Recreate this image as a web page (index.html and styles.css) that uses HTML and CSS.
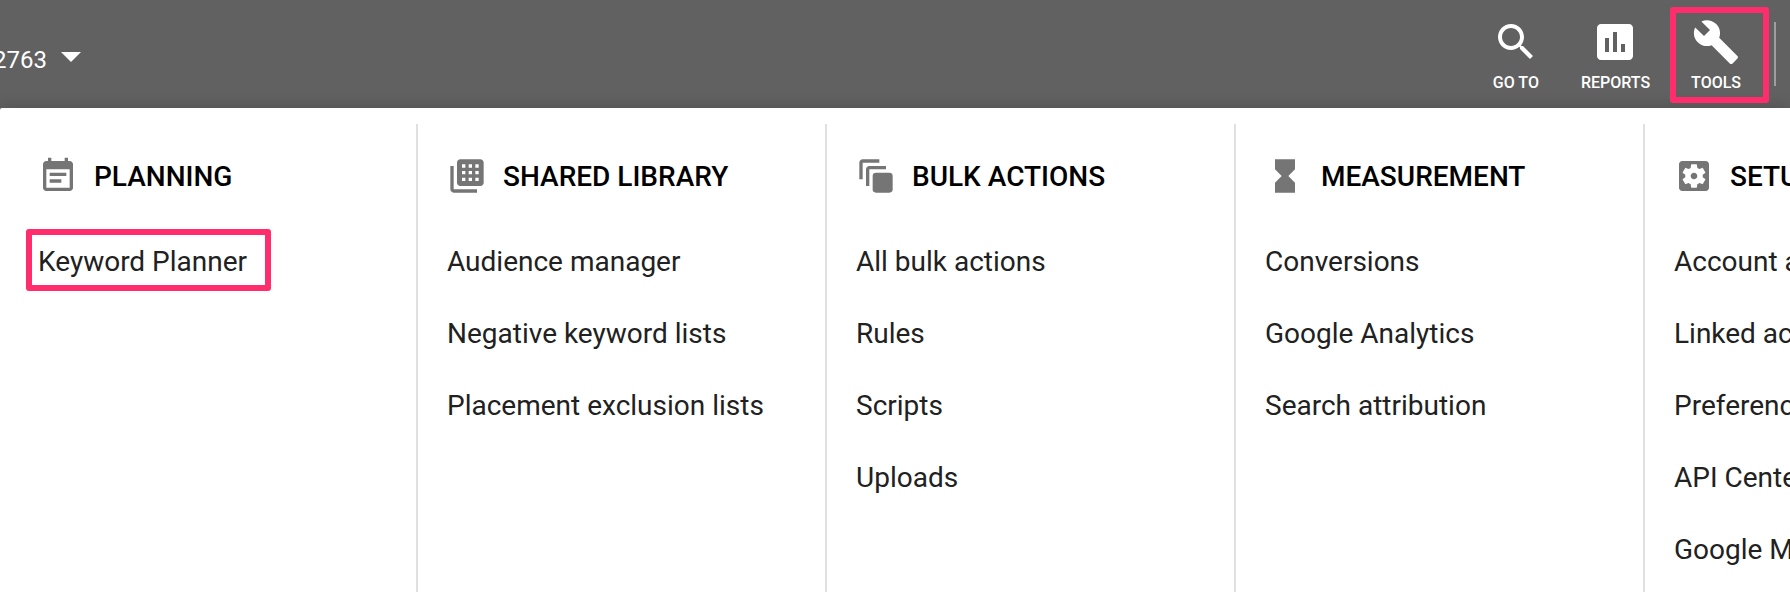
FILE: index.html
```html
<!DOCTYPE html>
<html lang="en">
<head>
  <meta charset="UTF-8">
  <title>Tools</title>
  <link rel="stylesheet" href="styles.css">
</head>
<body>
  <header class="topbar">
    <button class="account" type="button">
      <span class="account-id">2763</span>
      <svg class="caret" viewBox="0 0 24 24"><path d="M7 10l5 5 5-5z"/></svg>
    </button>

    <nav class="actions">
      <button class="action" type="button">
        <svg viewBox="0 0 24 24"><path d="M15.5 14h-.79l-.28-.27C15.41 12.59 16 11.11 16 9.5 16 5.91 13.09 3 9.5 3S3 5.91 3 9.5 5.91 16 9.5 16c1.61 0 3.09-.59 4.23-1.57l.27.28v.79l5 4.99L20.49 19l-4.99-5zm-6 0C7.01 14 5 11.99 5 9.5S7.01 5 9.5 5 14 7.01 14 9.5 11.99 14 9.5 14z"/></svg>
        <span>GO TO</span>
      </button>
      <button class="action" type="button">
        <svg viewBox="0 0 24 24"><path d="M19 3H5c-1.1 0-2 .9-2 2v14c0 1.1.9 2 2 2h14c1.1 0 2-.9 2-2V5c0-1.1-.9-2-2-2zM9 17H7v-7h2v7zm4 0h-2V7h2v10zm4 0h-2v-4h2v4z"/></svg>
        <span>REPORTS</span>
      </button>
      <button class="action marked" type="button">
        <svg viewBox="0 0 24 24"><path d="M22.7 19l-9.1-9.1c.9-2.3.4-5-1.5-6.9-2-2-5-2.4-7.4-1.3L9 6 6 9 1.6 4.7C.4 7.1.9 10.1 2.9 12.1c1.9 1.9 4.6 2.4 6.9 1.5l9.1 9.1c.4.4 1 .4 1.4 0l2.3-2.3c.5-.4.5-1.1.1-1.4z"/></svg>
        <span>TOOLS</span>
      </button>
    </nav>
    <div class="divider"></div>
  </header>

  <main class="menu">
    <section class="column">
      <h2>
        <svg viewBox="0 0 24 24"><path d="M17 10H7v2h10v-2zm2-7h-1V1h-2v2H8V1H6v2H5c-1.11 0-1.99.9-1.99 2L3 19c0 1.1.89 2 2 2h14c1.1 0 2-.9 2-2V5c0-1.1-.9-2-2-2zm0 16H5V8h14v11zm-5-5H7v2h7v-2z"/></svg>
        PLANNING
      </h2>
      <ul>
        <li><a class="marked" href="#">Keyword Planner</a></li>
      </ul>
    </section>

    <section class="column">
      <h2>
        <svg viewBox="0 0 24 24"><path d="M4 6H2v14c0 1.1.9 2 2 2h14v-2H4V6z"/><path fill-rule="evenodd" d="M20 2H8c-1.1 0-2 .9-2 2v12c0 1.1.9 2 2 2h12c1.1 0 2-.9 2-2V4c0-1.1-.9-2-2-2zM9 5h2v2H9zM13 5h2v2h-2zM17 5h2v2h-2zM9 9h2v2H9zM13 9h2v2h-2zM17 9h2v2h-2zM9 13h2v2H9zM13 13h2v2h-2zM17 13h2v2h-2z"/></svg>
        SHARED LIBRARY
      </h2>
      <ul>
        <li><a href="#">Audience manager</a></li>
        <li><a href="#">Negative keyword lists</a></li>
        <li><a href="#">Placement exclusion lists</a></li>
      </ul>
    </section>

    <section class="column">
      <h2>
        <svg viewBox="0 0 24 24"><path d="M2 14V4c0-1.1.9-2 2-2h10v2H4v10z"/><path d="M6 18V8c0-1.1.9-2 2-2h10v2H8v10z"/><rect x="10" y="10" width="12" height="12" rx="2"/></svg>
        BULK ACTIONS
      </h2>
      <ul>
        <li><a href="#">All bulk actions</a></li>
        <li><a href="#">Rules</a></li>
        <li><a href="#">Scripts</a></li>
        <li><a href="#">Uploads</a></li>
      </ul>
    </section>

    <section class="column">
      <h2>
        <svg viewBox="0 0 24 24"><path d="M6 2v6l4 4-4 4v6h12v-6l-4-4 4-4V2z"/></svg>
        MEASUREMENT
      </h2>
      <ul>
        <li><a href="#">Conversions</a></li>
        <li><a href="#">Google Analytics</a></li>
        <li><a href="#">Search attribution</a></li>
      </ul>
    </section>

    <section class="column">
      <h2>
        <svg viewBox="0 0 24 24"><path d="M12 10c-1.1 0-2 .9-2 2s.9 2 2 2 2-.9 2-2-.9-2-2-2zm7-7H5c-1.11 0-2 .9-2 2v14c0 1.1.89 2 2 2h14c1.11 0 2-.9 2-2V5c0-1.1-.89-2-2-2zm-1.75 9c0 .23-.02.46-.05.68l1.48 1.16c.13.11.17.3.08.45l-1.4 2.42c-.09.15-.27.21-.43.15l-1.74-.7c-.36.28-.76.51-1.18.69l-.26 1.85c-.03.17-.18.3-.35.3h-2.8c-.17 0-.32-.13-.35-.29l-.26-1.85c-.43-.18-.82-.41-1.18-.69l-1.74.7c-.16.06-.34 0-.43-.15l-1.4-2.42c-.09-.15-.05-.34.08-.45l1.48-1.16c-.03-.23-.05-.46-.05-.69 0-.23.02-.46.05-.68l-1.48-1.16c-.13-.11-.17-.3-.08-.45l1.4-2.42c.09-.15.27-.21.43-.15l1.74.7c.36-.28.76-.51 1.18-.69l.26-1.85c.03-.17.18-.3.35-.3h2.8c.17 0 .32.13.35.29l.26 1.85c.43.18.82.41 1.18.69l1.74-.7c.16-.06.34 0 .43.15l1.4 2.42c.09.15.05.34-.08.45l-1.48 1.16c.03.23.05.46.05.69z"/></svg>
        SETUP
      </h2>
      <ul>
        <li><a href="#">Account access</a></li>
        <li><a href="#">Linked accounts</a></li>
        <li><a href="#">Preferences</a></li>
        <li><a href="#">API Center</a></li>
        <li><a href="#">Google Merchant Center</a></li>
      </ul>
    </section>
  </main>
</body>
</html>
```
FILE: styles.css
```css
* { box-sizing: border-box; }
body {
  margin: 0; min-height: 100vh;
  display: flex; flex-direction: column;
  font-family: Roboto, sans-serif;
  background: #616161; overflow: hidden;
}
button {
  font: inherit; color: inherit; padding: 0;
  background: none; border: none; cursor: pointer;
}
svg { display: block; flex: none; fill: currentColor; }

/* top bar */
.topbar {
  display: flex; align-items: flex-start;
  padding: 18px 14px 15px 0; color: #fff;
}
.account { display: flex; margin-top: 14px; font-size: 24px; line-height: 56px; }
.account-id {
  width: 47px; display: flex; justify-content: flex-end; overflow: hidden;
}
.caret { width: 48px; height: 48px; }
.actions { display: flex; gap: 41px; margin-left: auto; }
.action {
  position: relative;
  display: flex; flex-direction: column; align-items: center; gap: 7px;
  font-size: 16px; font-weight: 500; line-height: 20px;
}
.action svg { width: 48px; height: 48px; }
.divider { width: 2px; height: 64px; margin: 4px 0 0 33px; background: #9e9e9e; }

/* pink frame around the highlighted items */
.marked::after {
  content: ""; position: absolute;
  border: 6px solid #ff2d6c; border-radius: 3px;
}
.action.marked::after { inset: -11px -28px -10px -21px; }
.column .marked::after { inset: 3px -24px 7px -12px; }

/* menu */
.menu {
  flex: 1; display: grid;
  grid-template-columns: repeat(4, 1fr) 145px;
  padding: 16px 0 0 9px;
  background: #fff; border-radius: 2px 0 0 0;
  box-shadow: 0 0 16px rgba(0, 0, 0, 0.2);
}
.column {
  min-width: 0; padding: 32px 0 0 29px;
  border-right: 2px solid #e0e0e0; white-space: nowrap;
}
.column:last-child { border-right: none; }
.column h2 {
  display: flex; align-items: flex-start; gap: 16px; margin: 0 0 28px;
  font-size: 28px; font-weight: 500; line-height: 42px; color: #000;
}
.column h2 svg { width: 40px; height: 40px; fill: #757575; }
.column ul { list-style: none; margin: 0; padding: 0; }
.column a {
  position: relative; display: inline-block;
  font-size: 28px; line-height: 72px; color: #212121; text-decoration: none;
}
.column li { height: 72px; }
```
